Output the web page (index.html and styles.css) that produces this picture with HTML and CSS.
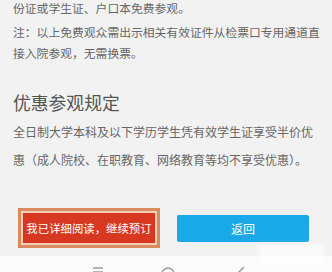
FILE: index.html
```html
<!DOCTYPE html>
<html lang="zh">
<head>
<meta charset="utf-8">
<link rel="stylesheet" href="styles.css">
</head>
<body>
<div class="page">
  <p class="p1">份证或学生证、户口本免费参观。</p>
  <p class="note">注：以上免费观众需出示相关有效证件从检票口专用通道直接入院参观，无需换票。</p>
  <h2 class="heading">优惠参观规定</h2>
  <p class="rule">全日制大学本科及以下学历学生凭有效学生证享受半价优惠（成人院校、在职教育、网络教育等均不享受优惠）。</p>
  <div class="actions">
    <div class="highlight"><button class="btn btn-red">我已详细阅读，继续预订</button></div>
    <button class="btn btn-blue">返回</button>
  </div>
</div>
<nav class="navbar">
  <svg class="nav-icon menu" width="12" height="10" viewBox="0 0 12 10"><path d="M1 2h10M1 6h10M1 10h10" stroke="#9a9a9a" stroke-width="1.4" fill="none"/></svg>
  <svg class="nav-icon home" width="16" height="10" viewBox="0 0 16 10"><circle cx="8" cy="8" r="6" stroke="#9a9a9a" stroke-width="1.5" fill="none"/></svg>
  <svg class="nav-icon back" width="12" height="10" viewBox="0 0 12 10"><path d="M10 1L3 8" stroke="#9a9a9a" stroke-width="1.5" fill="none"/></svg>
</nav>
<div class="watermark"></div>
</body>
</html>
```

FILE: styles.css
```css
html, body {
  margin: 0;
  padding: 0;
  width: 332px;
  height: 272px;
  overflow: hidden;
  background: #f2f2f2;
  font-family: "Noto Sans CJK SC", "Noto Sans", sans-serif;
}
.page {
  padding: 0 12px 0 13px;
  color: #666;
}
.p1, .note, .rule, .heading {
  margin: 0;
}
.p1 {
  font-size: 11.8px;
  line-height: 16px;
  white-space: nowrap;
}
.note {
  margin-top: 5px;
  font-size: 11.8px;
  line-height: 21px;
}
.heading {
  margin-top: 27px;
  font-size: 17.8px;
  line-height: 24px;
  font-weight: normal;
  color: #555;
}
.rule {
  margin-top: 4px;
  font-size: 12px;
  line-height: 28px;
}
.actions {
  margin-top: 34px;
  display: flex;
  align-items: center;
  padding-left: 5px;
}
.highlight {
  border: 3px solid #d98a5e;
  padding: 2px;
  background: #f5cfb4;
  display: flex;
}
.btn {
  border: none;
  width: 132px;
  color: #fff;
  font-family: inherit;
  font-size: 11.4px;
  padding: 0;
  white-space: nowrap;
}
.btn-red {
  height: 30px;
  background: #d83822;
}
.btn-blue {
  margin-left: 17px;
  height: 27px;
  background: #19a9e8;
  border-radius: 2px;
  font-size: 12px;
}
.navbar {
  margin-top: 8px;
  height: 20px;
  background: #fbfbfb;
  display: flex;
  align-items: flex-end;
}
.nav-icon { display: block; }
.menu { margin-left: 92px; }
.home { margin-left: 56px; }
.back { margin-left: 58px; }
.watermark {
  position: absolute;
  left: 258px;
  top: 244px;
  width: 66px;
  height: 20px;
  background: rgba(255,255,255,0.6);
  filter: blur(2px);
}
```
